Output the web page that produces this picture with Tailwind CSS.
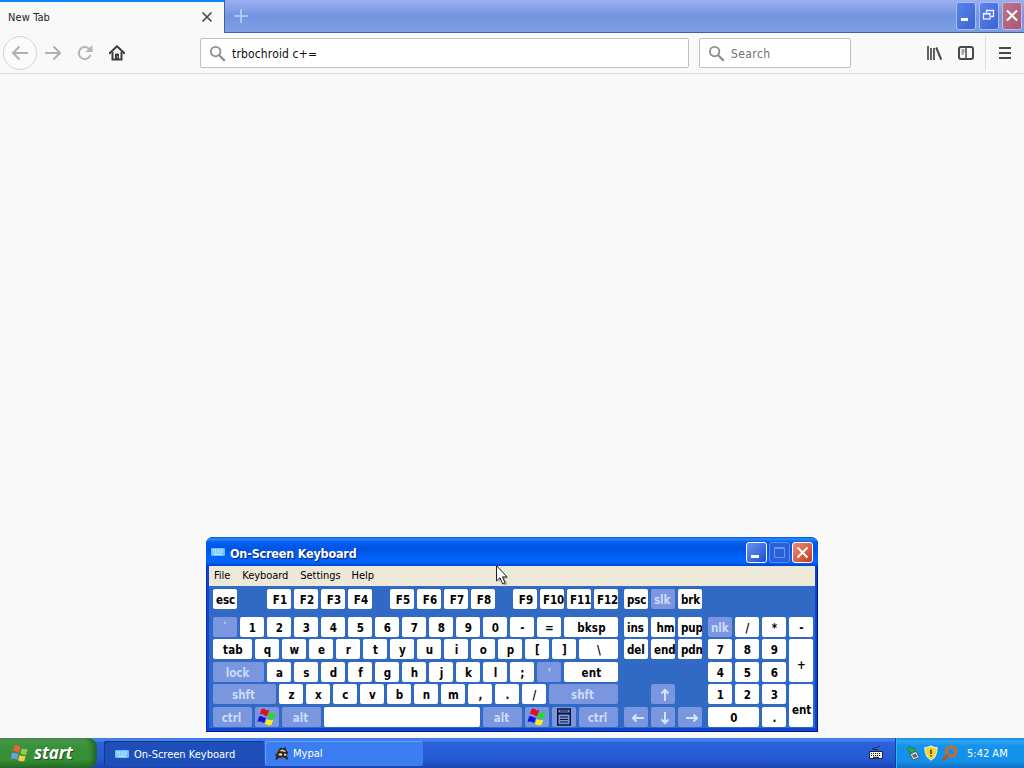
<!DOCTYPE html>
<html lang="en">
<head>
    <meta charset="UTF-8" />
    <title>New Tab</title>
    <script src="https://cdn.jsdelivr.net/npm/@tailwindcss/browser@4"></script>
</head>
<body class="relative flex h-[768px] w-[1024px] flex-col overflow-hidden bg-[#f9f9fa] font-['DejaVu_Sans_Condensed','DejaVu_Sans',sans-serif] text-[11px] text-black">

<!-- Shared icons -->
<svg class="hidden">
    <symbol id="glass" viewBox="0 0 18 18">
        <circle cx="7" cy="7" r="5" fill="none" stroke="#8f8f8f" stroke-width="2" />
        <path d="M10.8 10.8l5.2 5.2" stroke="#8f8f8f" stroke-width="2.4" stroke-linecap="round" />
    </symbol>
    <symbol id="board" viewBox="0 0 14 10">
        <rect x="0" y="1" width="14" height="8" rx="1" fill="#6cc0f5" />
        <path d="M1.500 3h11M1.500 5h11" stroke="#e4f6ff" stroke-dasharray="1.500 .7" />
        <path d="M3 7.200h8" stroke="#e4f6ff" />
    </symbol>
    <symbol id="flag" viewBox="0 0 20 20">
        <path d="M4.500 2q3-1.500 5 1.500l3-.5-2.500 6q-2.500.5-3.500-1.500l-3.500-.5z" fill="#e01020" />
        <path d="M13 5q1.500 2 5.500 1l-1.500 5.500q-3 1-6.500-1z" fill="#20e020" />
        <path d="M2 9.500q2-1 3 0 1.500 1.500 4 1l-1.500 5q-2 .5-3.500-1l-3.500.3z" fill="#1010d8" />
        <path d="M9.500 12q2.500 1.800 6.700.8l-1.700 5q-3 1.500-6.500-.8z" fill="#f4f020" />
    </symbol>
</svg>

<!-- Tab strip -->
<div class="flex h-[33px] shrink-0 bg-linear-to-b from-[#9aaff0] via-[#7494e0] to-[#7ba0e4]">
    <div class="flex w-[224px] items-center justify-between border-t-2 border-[#0a84ff] bg-[#f9f9fa] pr-[11px] pl-[8px]">
        <span class="pt-[1px] tracking-[0.1px] text-[#222]">New Tab</span>
        <svg class="mb-[2px] size-[12px]" viewBox="0 0 12 12"><path d="M1.500 1.500l9 9M10.500 1.500l-9 9" stroke="#4a4a4c" stroke-width="1.700" /></svg>
    </div>
    <div class="flex flex-1 justify-between border-b border-l border-[#45609f]">
        <svg class="mt-[9px] ml-[9px] size-[14px]" viewBox="0 0 14 14"><path d="M7 0v14M0 7h14" stroke="#b9d2fb" stroke-width="1.600" /></svg>
        <div class="flex gap-[3px] pt-[2px] pr-[2px]">
            <div class="h-[28px] w-[20px] rounded-[3px] border border-[#a9bdf5] bg-linear-to-br from-[#5b84e8] to-[#3b62d8]">
                <svg class="h-[26px] w-[18px]" viewBox="0 0 18 26"><rect x="4" y="15" width="7" height="3" fill="#fff" /></svg>
            </div>
            <div class="h-[28px] w-[20px] rounded-[3px] border border-[#a9bdf5] bg-linear-to-br from-[#5b84e8] to-[#3b62d8]">
                <svg class="h-[26px] w-[18px]" viewBox="0 0 18 26" fill="none" stroke="#f0f5ff"><path d="M6.500 9.500V7.500h7v6h-2.500M6 7.500h8" stroke-width="1.300" /><rect x="3.500" y="10.500" width="6.500" height="5.500" stroke-width="1.300" /><path d="M3 11h7.500" /></svg>
            </div>
            <div class="h-[28px] w-[20px] rounded-[3px] border border-[#d3b4da] bg-linear-to-br from-[#b8768e] to-[#ac5670]">
                <svg class="h-[26px] w-[18px]" viewBox="0 0 18 26"><path d="M4 7.500l10 10M14 7.500l-10 10" stroke="#fff" stroke-width="2" /></svg>
            </div>
        </div>
    </div>
</div>

<!-- Navigation toolbar -->
<div class="flex h-[41px] shrink-0 items-center border-b border-[#dcdcdd] text-[12px]">
    <div class="ml-[3px] flex size-[34px] items-center justify-center rounded-full border border-[#d4d4d5] bg-[#fbfbfb]">
        <svg class="size-[18px]" viewBox="0 0 18 18" fill="none" stroke="#b0b0b1" stroke-width="2"><path d="M17 9H2M8.500 2.500L2 9l6.500 6.500" /></svg>
    </div>
    <svg class="ml-[8px] size-[16px]" viewBox="0 0 16 16" fill="none" stroke="#b0b0b1" stroke-width="2"><path d="M0 8h15M8.500 1.500L15 8l-6.500 6.500" /></svg>
    <svg class="ml-[16px] size-[16px]" viewBox="0 0 16 16"><path d="M13.500 10A6 6 0 1 1 12 3.800" fill="none" stroke="#b4b4b5" stroke-width="2" /><path d="M15.500 0v7H8.500z" fill="#b4b4b5" /></svg>
    <svg class="ml-[16px] size-[16px]" viewBox="0 0 16 16"><path d="M.7 8.300L8 1.200l7.300 7.100" fill="none" stroke="#3e3e40" stroke-width="2" stroke-linecap="round" stroke-linejoin="round" /><path d="M3.500 7v7.500h9V7" fill="none" stroke="#3e3e40" stroke-width="2" /><path d="M6.500 14V9h3v5" fill="#3e3e40" stroke="#3e3e40" /><path d="M8.500 11.500v1" stroke="#fff" /></svg>
    <div class="ml-[75px] flex h-[30px] w-[489px] items-center rounded-[2px] border border-[#bfc1bc] bg-white pl-[8px]">
        <svg class="size-[17px]"><use href="#glass" /></svg>
        <span class="ml-[6px] pt-[2px] tracking-[0.15px] text-[#0c0c0d]">trbochroid c+=</span>
    </div>
    <div class="ml-[10px] flex h-[30px] w-[152px] items-center rounded-[2px] border border-[#bfc1bc] bg-white pl-[8px]">
        <svg class="size-[17px]"><use href="#glass" /></svg>
        <span class="ml-[6px] pt-[2px] tracking-[0.4px] text-[#737373]">Search</span>
    </div>
    <svg class="ml-[75px] size-[16px]" viewBox="0 0 16 16" stroke="#48484a" stroke-width="2"><path d="M2 1v14M5 3v12M8 3v12" stroke-width="1.700" /><path d="M10.200 2.500l5 12" /></svg>
    <svg class="ml-[16px] size-[16px]" viewBox="0 0 16 16" fill="none" stroke="#48484a"><rect x="1" y="2" width="14" height="12" rx="2" stroke-width="2" /><path d="M8 2v12" stroke-width="1.500" /><path d="M3.500 5h3M3.500 7h3M3.500 9h2" /></svg>
    <div class="ml-[11px] h-[34px] w-px bg-[#dededf]"></div>
    <svg class="ml-[13px] size-[12px]" viewBox="0 0 12 12" stroke="#48484a" stroke-width="2"><path d="M0 1h12M0 6h12M0 11h12" /></svg>
</div>

<div class="flex-1"></div>

<!-- Taskbar -->
<div class="flex h-[30px] shrink-0 bg-[linear-gradient(#3a78e0_0,#4385f0_2px,#2b62da_5px,#2459d4_22px,#1c44b0_100%)] text-[11px] text-white">
    <div class="flex w-[97px] items-center rounded-r-[9px] bg-[linear-gradient(#6aa868_0,#48994a_3px,#3a913a_8px,#358f33_22px,#276d27_100%)] pl-[10px] shadow-[inset_-4px_0_5px_#1f6427]">
        <svg class="h-[19px] w-[19px]" viewBox="0 0 20 20">
            <path d="M4.500 2q3-1.500 5 0l1.500 1-1.500 6q-2.500-.5-3.500-1.500l-3-.5z" fill="#ee6138" />
            <path d="M12.500 4.500q2.500 1.500 6 .5l-1.500 6q-3 1-6-1z" fill="#8ed04f" />
            <path d="M2 9.500q4-.5 7 1l-1.500 6q-3-2-6.500-1z" fill="#6e9cf0" />
            <path d="M10 11.500q2.500 1.800 6.500.8l-1.500 5.500q-3 1.200-6.500-.8z" fill="#f7cd3c" />
        </svg>
        <span class="ml-[5px] pb-[2px] font-['Open_Sans',sans-serif] text-[17px] leading-none font-bold tracking-[-0.1px] italic [text-shadow:1px_1px_1px_#1b4d1b]">start</span>
    </div>
    <div class="mt-[3px] ml-[7px] flex h-[25px] w-[160px] items-center rounded-[2px] bg-[#1e4fb8] pl-[11px] shadow-[inset_1px_1px_1px_#143683]">
        <svg class="h-[10px] w-[14px]"><use href="#board" /></svg>
        <span class="ml-[5px] pt-[3px]">On-Screen Keyboard</span>
    </div>
    <div class="mt-[3px] ml-[1px] flex h-[25px] w-[158px] items-center rounded-[2px] bg-[#3c7ef2] pl-[9px] shadow-[inset_1px_1px_1px_#6ba0fa]">
        <svg class="mb-[1px] size-[15px]" viewBox="0 0 15 15">
            <path d="M4 4l3-2.500 2 1 3-1.500v2.500l2 3-1 3 1 4h-2l-1-2-3 1-3-1-2 2H1l1.500-3L.5 8 3 7z" fill="#2a241d" />
            <path d="M5 5l3-1.500 3 1 1 1.500-3-.5zM4 9l2-2 2.500 1-1 2zM10 7.500l2.500.5-.5 2-2-.5z" fill="#e6d3b4" />
            <path d="M1.500 8.500l2-1M7 11.500l3 .5M2.500 5.500l2-1" stroke="#a46c35" />
        </svg>
        <span class="ml-[4px] pt-[2px]">Mypal</span>
    </div>
    <div class="flex flex-1 items-center justify-end pr-[12px]">
        <svg class="h-[14px] w-[14px]" viewBox="0 0 14 14">
            <path d="M3 2.500h2M6 1.500h2M9 .5h2M4 3.500h5" fill="none" stroke="#16264f" />
            <rect x=".5" y="5.500" width="13" height="7" fill="#f5f2e4" stroke="#1a2444" />
            <path d="M2 7.500h10M2 9.500h10" stroke="#111" stroke-dasharray="1 1" />
            <path d="M4 11.300h6" stroke="#111" />
        </svg>
    </div>
    <div class="flex w-[129px] items-center border-l border-[#123f98] bg-[linear-gradient(#1b8ae0_0,#2ba6f6_3px,#1593ea_8px,#1391ea_23px,#1070c4_100%)] pl-[10px] shadow-[inset_1px_0_0_#35b4f8]">
        <svg class="size-[15px]" viewBox="0 0 15 15">
            <path d="M4 8l6-3 3.500 6.500L7 14z" fill="#d5dddd" stroke="#4d5a60" />
            <path d="M6 9l3.500-1.500 2 3L8 12z" fill="#4f6c7c" />
            <path d="M1 2.500L4 .5l1.500 2L9 2 7.500 6.500 3 7l1-2z" fill="#2fae3a" stroke="#187628" stroke-width=".6" />
        </svg>
        <svg class="ml-[3px] h-[16px] w-[14px]" viewBox="0 0 14 16">
            <path d="M7 1q3 2 6 1.500.5 8.500-6 12.500Q.5 11 1 2.500 4 3 7 1z" fill="#f6d722" stroke="#e8e8d8" stroke-width="1.200" />
            <path d="M7 4.500v4.500M7 10v1.500" stroke="#333" stroke-width="1.500" />
        </svg>
        <svg class="ml-[3px] size-[17px]" viewBox="0 0 17 17" fill="none">
            <circle cx="10" cy="6.500" r="4.800" stroke="#d2691c" stroke-width="2.800" />
            <path d="M6.500 10.500L2.500 14.500" stroke="#b85612" stroke-width="3" stroke-linecap="round" />
            <path d="M9 5l2.500 3" stroke="#9a5a30" />
        </svg>
        <span class="ml-[9px] pt-[2px]">5:42 AM</span>
    </div>
</div>

<!-- On-Screen Keyboard window -->
<div class="absolute top-[537px] left-[206px] flex h-[195px] w-[612px] flex-col rounded-t-[7px] bg-[#0a46d4] px-[3px] pb-[4px] shadow-[inset_-1px_-1px_0_#00138c,inset_1px_0_0_#0831c0]">
    <div class="mx-[-3px] flex h-[29px] shrink-0 items-center rounded-t-[7px] bg-[linear-gradient(#0a50c8_0,#2b8bff_2px,#0560f0_5px,#0054e3_12px,#0062fa_20px,#0066ff_25px,#0043cf_100%)] pr-[5px] pl-[5px] text-white">
        <svg class="h-[10px] w-[14px]"><use href="#board" /></svg>
        <span class="ml-[5px] flex-1 pt-[5px] text-[12.500px] font-bold tracking-[-0.2px] [text-shadow:1px_1px_1px_#0a1883]">On-Screen Keyboard</span>
        <div class="flex gap-[2px] pt-[2px]">
            <div class="size-[21px] rounded-[3px] border border-white bg-linear-to-br from-[#6b93ee] to-[#1c4bd2]">
                <svg class="size-[19px]" viewBox="0 0 19 19"><rect x="4" y="12" width="8" height="3" fill="#fff" /></svg>
            </div>
            <div class="size-[21px] rounded-[3px] border border-[#5e8cf0] bg-[#2a5fdc]">
                <svg class="size-[19px]" viewBox="0 0 19 19"><path d="M4.500 4.500h10v10h-10zM4 5.500h11" fill="none" stroke="#6d97ec" /></svg>
            </div>
            <div class="size-[21px] rounded-[3px] border border-white bg-linear-to-br from-[#ec8c72] to-[#c9391a]">
                <svg class="size-[19px]" viewBox="0 0 19 19"><path d="M4.500 4.500l10 10M14.500 4.500l-10 10" stroke="#fff" stroke-width="2" /></svg>
            </div>
        </div>
    </div>
    <div class="flex h-[20px] shrink-0 items-center gap-[12px] bg-[#ece9d8] pl-[5px] tracking-[-0.05px]">
        <span>File</span>
        <span>Keyboard</span>
        <span>Settings</span>
        <span class="-ml-px">Help</span>
    </div>
    <div class="flex flex-1 gap-[6px] bg-[#316ac5] pt-[3px] pl-[4px] text-[11.500px] leading-none font-bold">
        <div id="mainKeys" class="w-[405px]"></div>
        <div id="navKeys" class="w-[78px]"></div>
        <div id="numKeys" class="grid w-[105px] auto-rows-min grid-cols-[24px_24px_24px_24px] grid-rows-[22px_23px_22px_23px_20px] gap-x-[3px] pt-[28px]"></div>
    </div>
</div>

<!-- Mouse pointer -->
<svg class="absolute top-[565px] left-[496px] h-[22px] w-[15px]" viewBox="0 0 15 22">
    <path d="M2.500 3v14l3-2.500 3 6 3-1.500-3-5.500h4z" fill="#000" opacity=".25" />
    <path d="M.5.700v15.300l3.500-3.300 2.700 6.300 2.500-1.100-2.700-6H11z" fill="#fff" stroke="#222" />
</svg>

<script>
    // [label, width, modifier?]; a null label leaves a gap
    const w = 24;
    const chars = (s) => s.split(" ").map(c => [c, w]);

    const mainRows = [
        { h: 28, keys: [["esc", w], [null, w], ...chars("F1 F2 F3 F4"), [null, 12], ...chars("F5 F6 F7 F8"), [null, 12], ...chars("F9 F10 F11 F12")] },
        { h: 22, keys: [["`", w, true], ...chars("1 2 3 4 5 6 7 8 9 0 - ="), ["bksp", 54]] },
        { h: 23, keys: [["tab", 39], ...chars("q w e r t y u i o p [ ]"), ["\\", 39]] },
        { h: 22, keys: [["lock", 51, true], ...chars("a s d f g h j k l ;"), ["'", w, true], ["ent", 54]] },
        { h: 23, keys: [["shft", 63, true], ...chars("z x c v b n m , . /"), ["shft", 69, true]] },
        { h: 20, keys: [["ctrl", 39, true], ["win", w, true], ["alt", 39, true], ["", 156], ["alt", 39, true], ["win", w, true], ["menu", w, true], ["ctrl", 39, true]] }
    ];

    const navRows = [
        { h: 28, keys: [["psc", w], ["slk", w, true], ["brk", w]] },
        { h: 22, keys: chars("ins hm pup") },
        { h: 23, keys: chars("del end pdn") },
        { h: 22, keys: [] },
        { h: 23, keys: [[null, w], ["up", w, true]] },
        { h: 20, keys: [["left", w, true], ["down", w, true], ["right", w, true]] }
    ];

    const arrow = (d) => `<svg class="ml-[3px] mt-[2px] size-[14px]" viewBox="0 0 14 14" fill="none" stroke="#d3e5fc" stroke-width="2"><path d="${d}" /></svg>`;
    const icons = {
        win: `<svg class="size-[20px]"><use href="#flag" /></svg>`,
        menu: `<svg class="h-[18px] w-[14px]" viewBox="0 0 14 18"><rect x=".75" y="1" width="12.500" height="16" fill="#7a96df" stroke="#0a1030" stroke-width="1.500" /><path d="M1 5.500h12" stroke="#0a1030" stroke-width="2" /><path d="M3 3h8M3 9h8M3 11.500h8M3 14h8" stroke="#0a1030" /></svg>`,
        up: arrow("M7 13V2M3.500 5.500L7 2l3.500 3.500"),
        down: arrow("M7 1v11M3.500 8.500L7 12l3.500-3.500"),
        left: arrow("M13 7H2M5.500 3.500L2 7l3.500 3.500"),
        right: arrow("M1 7h11M8.500 3.500L12 7l-3.500 3.500")
    };

    function textClass(label, width, modifier) {
        if (width === w && label.length > 2) return "ml-[3px] pt-[3px] tracking-[-0.1px]";
        if (label === "hm") return "pt-[3px] pl-[5px]";
        if (label.length === 2) return "pt-[3px] pl-[2px]";
        if (modifier && width > w) return "pt-[3px] pr-[2px]";
        return "pt-[3px] pl-[1px] tracking-[0.2px]";
    }

    function makeKey([label, width, modifier]) {
        const key = document.createElement("div");
        key.style.width = width + "px";
        if (label === null) return key;
        key.className = modifier
            ? "flex h-[20px] items-center justify-center rounded-[2px] bg-[#7a96df] text-[#c9dcfa] whitespace-nowrap"
            : "flex h-[20px] items-center justify-center overflow-hidden rounded-[2px] bg-white whitespace-nowrap";
        if (icons[label]) {
            key.innerHTML = icons[label];
        } else {
            const text = document.createElement("span");
            text.className = textClass(label, width, modifier);
            text.textContent = label;
            key.appendChild(text);
            if (label.length > 2 && width === w) key.classList.replace("justify-center", "justify-start");
        }
        return key;
    }

    function addRows(id, rows) {
        const block = document.getElementById(id);
        rows.forEach(r => {
            const row = document.createElement("div");
            row.className = "flex items-start gap-[3px]";
            row.style.height = r.h + "px";
            r.keys.forEach(k => row.appendChild(makeKey(k)));
            block.appendChild(row);
        });
    }

    addRows("mainKeys", mainRows);
    addRows("navKeys", navRows);

    const pad = document.getElementById("numKeys");
    [["nlk", w, true], ...chars("/ * - 7 8 9 + 4 5 6 1 2 3 ent"), ["0", 51], [".", w]].forEach(k => {
        const key = makeKey(k);
        if (k[0] === "+" || k[0] === "ent") {
            key.classList.add("row-span-2", "pt-[8px]");
            key.classList.replace("h-[20px]", "h-[43px]");
        }
        if (k[0] === "0") key.classList.add("col-span-2");
        pad.appendChild(key);
    });
</script>
</body>
</html>
